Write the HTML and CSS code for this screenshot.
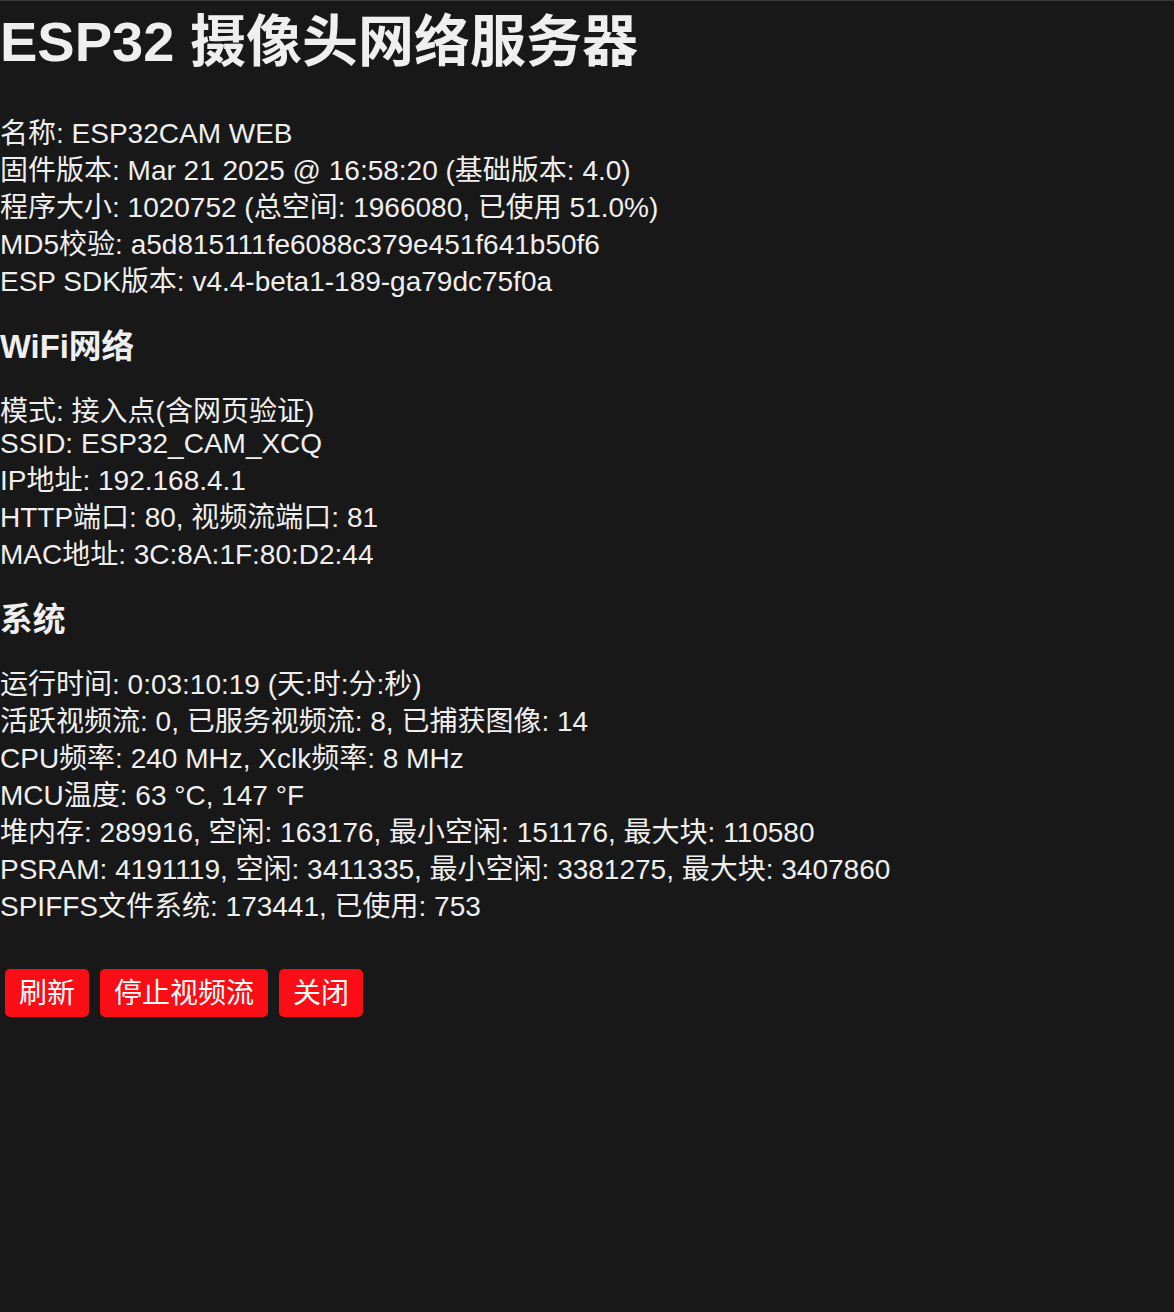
FILE: index.html
```html
<!DOCTYPE html>
<html lang="zh-CN">
<head>
<meta charset="utf-8">
<title>ESP32 摄像头网络服务器</title>
<link rel="stylesheet" href="styles.css">
</head>
<body>
<h1 class="title">ESP32 摄像头网络服务器</h1>
<div class="info info-first">
  <div class="line">名称: ESP32CAM WEB</div>
  <div class="line">固件版本: Mar 21 2025 @ 16:58:20 (基础版本: 4.0)</div>
  <div class="line">程序大小: 1020752 (总空间: 1966080, 已使用 51.0%)</div>
  <div class="line">MD5校验: a5d815111fe6088c379e451f641b50f6</div>
  <div class="line">ESP SDK版本: v4.4-beta1-189-ga79dc75f0a</div>
</div>
<h3 class="section">WiFi网络</h3>
<div class="info">
  <div class="line line-tight">模式: 接入点(含网页验证)</div>
  <div class="line">SSID: ESP32_CAM_XCQ</div>
  <div class="line">IP地址: 192.168.4.1</div>
  <div class="line">HTTP端口: 80, 视频流端口: 81</div>
  <div class="line">MAC地址: 3C:8A:1F:80:D2:44</div>
</div>
<h3 class="section">系统</h3>
<div class="info">
  <div class="line">运行时间: 0:03:10:19 (天:时:分:秒)</div>
  <div class="line">活跃视频流: 0, 已服务视频流: 8, 已捕获图像: 14</div>
  <div class="line">CPU频率: 240 MHz, Xclk频率: 8 MHz</div>
  <div class="line">MCU温度: 63 °C, 147 °F</div>
  <div class="line">堆内存: 289916, 空闲: 163176, 最小空闲: 151176, 最大块: 110580</div>
  <div class="line">PSRAM: 4191119, 空闲: 3411335, 最小空闲: 3381275, 最大块: 3407860</div>
  <div class="line">SPIFFS文件系统: 173441, 已使用: 753</div>
</div>
<div class="actions">
  <button class="btn" type="button">刷新</button>
  <button class="btn" type="button">停止视频流</button>
  <button class="btn" type="button">关闭</button>
</div>
</body>
</html>
```

FILE: styles.css
```css
html {
  background: #181818;
}
body {
  margin: 0;
  border-top: 1px solid #3b3b3b;
  background: #181818;
  color: #efefef;
  font-family: "Liberation Sans", Arial, "Noto Sans CJK SC", sans-serif;
  font-size: 28px;
  line-height: 37px;
  min-height: 1311px;
}
.title {
  margin: 9px 0 0;
  font-size: 56px;
  line-height: 64px;
  font-weight: bold;
}
.info {
  margin: 0;
}
.info-first {
  margin-top: 41px;
}
.line {
  white-space: nowrap;
}
.line-tight {
  margin-bottom: -5px;
}
.section {
  margin: 27px 0 26px;
  font-size: 32.76px;
  line-height: 40px;
  font-weight: bold;
}
.actions {
  display: flex;
  gap: 11px;
  margin-top: 44px;
  padding-left: 5px;
}
.btn {
  height: 48px;
  padding: 0 14px;
  border: none;
  border-radius: 5px;
  background: #fb0d15;
  color: #ffffff;
  font-family: "Liberation Sans", Arial, "Noto Sans CJK SC", sans-serif;
  font-size: 28px;
  line-height: 37px;
  cursor: pointer;
}
```
